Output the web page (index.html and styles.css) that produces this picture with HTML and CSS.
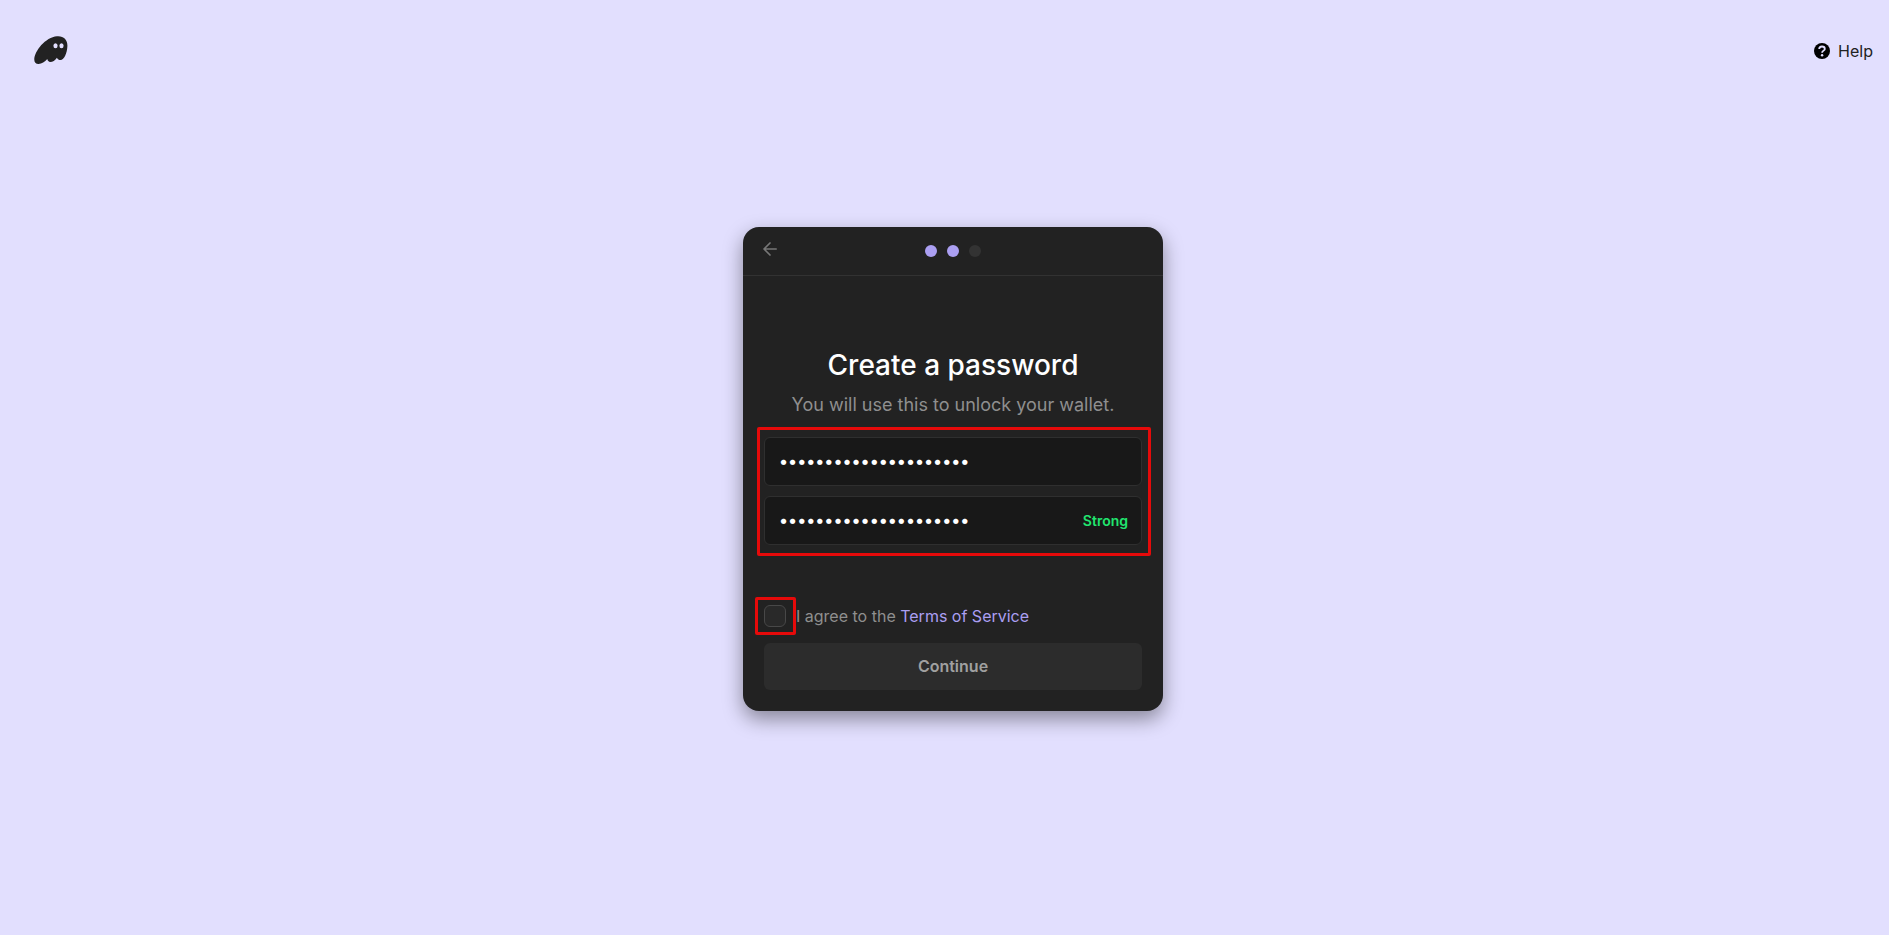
FILE: index.html
```html
<!DOCTYPE html>
<html lang="en">
<head>
<meta charset="utf-8">
<title>Create a password</title>
<link rel="stylesheet" href="styles.css">
</head>
<body>
<header class="topbar">
  <svg class="logo" viewBox="0 0 34 28" role="img" aria-label="Wallet logo">
    <path fill="#222" d="M23 .2C29.500-.4 33.600 3.600 33.400 10C33.200 17 30 24 26.600 24C25 24 23.600 23.200 22.900 21.700C21.300 24.400 18.500 26 16.300 26C14.700 26 13.600 24.800 13.300 23.100C10.800 26 7.700 27.900 4.600 27.900C1.700 27.900.3 26.300.3 23.700C.3 15 11.500 1.200 23 .2Z"/>
    <ellipse cx="21.500" cy="9.800" rx="2.100" ry="2.500" fill="#e2dffe"/>
    <ellipse cx="27.500" cy="9.800" rx="2.100" ry="2.500" fill="#e2dffe"/>
  </svg>
  <a class="help" href="#">
    <svg class="help-icon" viewBox="0 0 16 16" aria-hidden="true">
      <circle cx="8" cy="8" r="8" fill="#000"/>
      <path d="M5.200 6.100C5.200 4.300 6.400 3.500 8 3.500S10.800 4.400 10.800 5.900C10.800 7.700 8.100 7.600 8.100 9.800" fill="none" stroke="#e2dffe" stroke-width="1.800"/>
      <circle cx="8.100" cy="12.200" r="1.200" fill="#e2dffe"/>
    </svg>
    Help
  </a>
</header>
<main class="stage">
  <form class="card">
    <div class="card-head">
      <button class="back" type="button" aria-label="Back">
        <svg class="back-icon" viewBox="0 0 14 14" aria-hidden="true"><path d="M13.200 7H1.200M7 1L1 7l6 6" fill="none" stroke="#777" stroke-width="1.700" stroke-linecap="round" stroke-linejoin="round"/></svg>
      </button>
      <div class="steps">
        <span class="step done"></span>
        <span class="step done"></span>
        <span class="step"></span>
      </div>
    </div>
    <div class="card-body">
      <h1 class="title">Create a password</h1>
      <p class="subtitle">You will use this to unlock your wallet.</p>
      <div class="fields marked">
        <input class="field" type="password" aria-label="Password" value="aaaaaaaaaaaaaaaaaaaaa">
        <div class="field-wrap">
          <input class="field" type="password" aria-label="Confirm password" value="aaaaaaaaaaaaaaaaaaaaa">
          <span class="strength">Strong</span>
        </div>
      </div>
      <div class="terms">
        <span class="check-wrap marked"><input class="check" type="checkbox" id="agree"></span>
        <label class="terms-label" for="agree">I agree to the <a class="terms-link" href="#">Terms of Service</a></label>
      </div>
      <button class="continue" type="button">Continue</button>
    </div>
  </form>
</main>
</body>
</html>
```
FILE: styles.css
```css
* {
  box-sizing: border-box;
}

body {
  margin: 0;
  min-height: 100vh;
  display: grid;
  grid-template-rows: 100px 1fr 97px;
  background: #e2dffe;
  font-family: Inter, "Liberation Sans", sans-serif;
  color: #222;
}

.topbar {
  display: flex;
  align-items: center;
  justify-content: space-between;
  padding: 0 16px 0 34px;
}

.logo {
  width: 34px;
  height: 28px;
}

.help {
  display: flex;
  align-items: center;
  gap: 8px;
  padding-top: 2px;
  font-size: 16px;
  line-height: 20px;
  color: #222;
  text-decoration: none;
}

.help-icon {
  width: 16px;
  height: 16px;
}

.stage {
  display: flex;
  align-items: center;
  justify-content: center;
  padding-left: 17px;
}

.card {
  width: 420px;
  background: #222;
  border-radius: 16px;
  box-shadow: 0 8px 20px rgba(0, 0, 0, 0.4);
}

.card-head {
  display: grid;
  grid-template-columns: 1fr auto 1fr;
  align-items: center;
  height: 49px;
  padding: 0 20px;
  border-bottom: 1px solid #323232;
}

.back {
  display: flex;
  width: 14px;
  margin: 0 0 4px;
  padding: 0;
  border: 0;
  background: none;
}

.back-icon {
  width: 14px;
  height: 14px;
}

.steps {
  display: flex;
  gap: 10px;
}

.step {
  width: 12px;
  height: 12px;
  border-radius: 50%;
  background: #333;
}

.step.done {
  background: #ab9ff2;
}

.card-body {
  padding: 72px 21px 21px;
}

.title {
  margin: 0;
  font-size: 28px;
  line-height: 34px;
  font-weight: 500;
  text-align: center;
  color: #fff;
}

.subtitle {
  margin: 12px 0 21px;
  font-size: 18px;
  line-height: 22px;
  text-align: center;
  color: #8f8f8f;
}

.marked {
  position: relative;
}

.marked::after {
  content: "";
  position: absolute;
  inset: -10px -9px -11px -7px;
  border: 3px solid #e60a0a;
  border-radius: 2px;
  pointer-events: none;
}

.fields {
  display: grid;
  gap: 10px;
}

.field-wrap {
  position: relative;
}

.field {
  display: block;
  width: 100%;
  height: 49px;
  padding: 0 14px 1px;
  border: 1px solid #2f2f2f;
  border-radius: 6px;
  background: #181818;
  font-family: inherit;
  font-size: 17px;
  font-weight: 500;
  color: #fff;
  outline: 0;
}

.strength {
  position: absolute;
  top: 0;
  right: 14px;
  font-size: 14px;
  line-height: 49px;
  font-weight: 600;
  color: #21e56f;
}

.terms {
  display: flex;
  align-items: center;
  gap: 10px;
  margin: 60px 0 16px;
}

.check-wrap {
  display: flex;
}

.check-wrap::after {
  inset: -8px -10px -8px -9px;
}

.check {
  appearance: none;
  width: 22px;
  height: 22px;
  margin: 0;
  border: 1px solid #484848;
  border-radius: 6px;
  background: #292929;
}

.terms-label {
  font-size: 16px;
  line-height: 22px;
  color: #8f8f8f;
}

.terms-link {
  color: #ab9ff2;
  text-decoration: none;
}

.continue {
  display: block;
  width: 100%;
  height: 47px;
  padding: 0 0 2px;
  border: 0;
  border-radius: 6px;
  background: #2c2c2c;
  font-family: inherit;
  font-size: 16px;
  font-weight: 600;
  color: #a0a0a0;
}
```
